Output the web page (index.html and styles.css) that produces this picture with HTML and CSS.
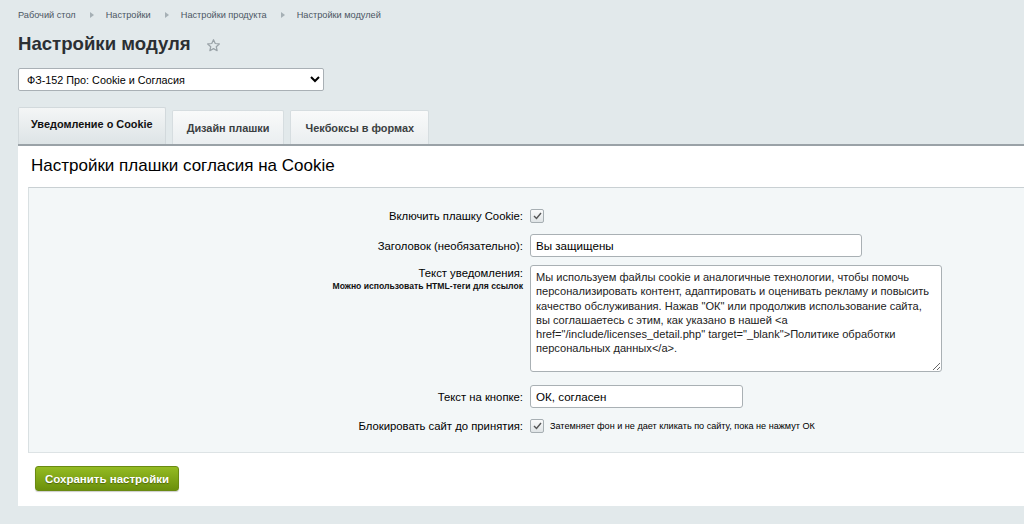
FILE: index.html
```html
<!DOCTYPE html>
<html lang="ru">
<head>
	<meta charset="utf-8">
	<title>Настройки модуля</title>
	<link rel="stylesheet" href="styles.css">
</head>
<body>

	<div class="crumbs">
		<a href="#">Рабочий стол</a><span class="sep"></span>
		<a href="#">Настройки</a><span class="sep"></span>
		<a href="#">Настройки продукта</a><span class="sep"></span>
		<a href="#">Настройки модулей</a>
	</div>

	<div class="title-row">
		<h1>Настройки модуля</h1>
		<svg class="star" width="15" height="15" viewBox="0 0 24 24"><path d="M12 2.8l2.8 6 6.5.7-4.9 4.4 1.4 6.4L12 17l-5.8 3.3 1.4-6.4-4.9-4.4 6.5-.7z" fill="none" stroke="#9aa3a8" stroke-width="2" stroke-linejoin="round"/></svg>
	</div>

	<select class="module-select">
		<option>ФЗ-152 Про: Cookie и Согласия</option>
	</select>

	<div class="tabs">
		<div class="tab active">Уведомление о Cookie</div>
		<div class="tab">Дизайн плашки</div>
		<div class="tab">Чекбоксы в формах</div>
	</div>

	<div class="panel">
		<h2>Настройки плашки согласия на Cookie</h2>

		<div class="form">
			<div class="row row-check">
				<div class="label">Включить плашку Cookie:</div>
				<div class="field"><span class="check"><svg width="9" height="8" viewBox="0 0 9 8"><path d="M1 4l2.5 2.5L8 1" fill="none" stroke="#555" stroke-width="1.4"/></svg></span></div>
			</div>
			<div class="row">
				<div class="label">Заголовок (необязательно):</div>
				<div class="field"><input class="text wide" type="text" value="Вы защищены"></div>
			</div>
			<div class="row row-top">
				<div class="label">Текст уведомления:<div class="note">Можно использовать HTML-теги для ссылок</div></div>
				<div class="field"><textarea class="area">Мы используем файлы cookie и аналогичные технологии, чтобы помочь персонализировать контент, адаптировать и оценивать рекламу и повысить качество обслуживания. Нажав "ОК" или продолжив использование сайта, вы соглашаетесь с этим, как указано в нашей &lt;a href="/include/licenses_detail.php" target="_blank"&gt;Политике обработки персональных данных&lt;/a&gt;.</textarea></div>
			</div>
			<div class="row">
				<div class="label">Текст на кнопке:</div>
				<div class="field"><input class="text short" type="text" value="ОК, согласен"></div>
			</div>
			<div class="row row-check">
				<div class="label">Блокировать сайт до принятия:</div>
				<div class="field"><span class="check"><svg width="9" height="8" viewBox="0 0 9 8"><path d="M1 4l2.5 2.5L8 1" fill="none" stroke="#555" stroke-width="1.4"/></svg></span><span class="hint">Затемняет фон и не дает кликать по сайту, пока не нажмут ОК</span></div>
			</div>
		</div>

		<button class="save">Сохранить настройки</button>
	</div>

</body>
</html>
```

FILE: styles.css
```css
body {
	margin: 0;
	padding: 0 0 0 18px;
	background: #e2e9eb;
	font-family: "Liberation Sans", Arial, sans-serif;
	color: #000;
	overflow: hidden;
	height: 524px;
}

.crumbs {
	display: flex;
	align-items: center;
	padding-top: 9px;
	height: 12px;
	font-size: 9.2px;
}
.crumbs a {
	color: #4b5663;
	text-decoration: none;
}
.crumbs .sep {
	width: 0;
	height: 0;
	margin: 0 12px 0 14px;
	border-left: 4px solid #a6b0b5;
	border-top: 3px solid transparent;
	border-bottom: 3px solid transparent;
}

.title-row {
	display: flex;
	align-items: center;
	height: 26px;
	margin-top: 10px;
}
h1 {
	margin: 0;
	font-size: 18.6px;
	font-weight: bold;
	color: #2b2f33;
}
.star {
	margin-left: 15px;
	margin-top: 2px;
}

.module-select {
	display: block;
	margin-top: 11px;
	width: 306px;
	height: 23px;
	font-family: "Liberation Sans", Arial, sans-serif;
	font-size: 10.8px;
	color: #000;
	background: #fff;
	border: 1px solid #a9b0b5;
	border-radius: 2px;
	padding: 0 4px;
}

.tabs {
	display: flex;
	align-items: flex-end;
	gap: 6px;
	margin-top: 15px;
	height: 38px;
}
.tab {
	display: flex;
	align-items: center;
	justify-content: center;
	height: 33px;
	padding: 0 14px;
	font-size: 10.9px;
	font-weight: bold;
	color: #3b3f42;
	background: linear-gradient(#f9fafa, #eaeef0);
	border: 1px solid #d6dde0;
	border-bottom: none;
	border-radius: 2px 2px 0 0;
}
.tab.active {
	height: 37px;
	padding: 0 12px 4px;
	box-sizing: border-box;
	color: #111;
	background: linear-gradient(#f4f6f6, #dde4e6);
	border-color: #d2d9dc;
}

.panel {
	background: #fff;
	border-top: 2px solid #9aa2a7;
	padding: 0 0 15px 10px;
}
h2 {
	margin: 0;
	padding: 10px 0 0 3px;
	height: 31px;
	font-size: 17px;
	font-weight: normal;
	color: #000;
}

.form {
	background: #f3f7f8;
	border-top: 1px solid #c9d0d3;
	border-left: 1px solid #d9e0e2;
	border-bottom: 1px solid #dde3e5;
	padding: 20px 0 18px;
}
.row {
	display: grid;
	grid-template-columns: 501px 1fr;
	align-items: center;
	margin-bottom: 10px;
	font-size: 11.3px;
}
.row:last-child {
	margin-bottom: 0;
}
.row-top {
	align-items: start;
	margin-bottom: 13px;
}
.row-check {
	height: 16px;
}
.label {
	text-align: right;
	padding-right: 7px;
	color: #000;
}
.row-top .label {
	padding-top: 0;
	line-height: 13px;
}
.note {
	font-size: 8.6px;
	font-weight: bold;
	color: #111;
	line-height: 12px;
}
.field {
	display: flex;
	align-items: center;
}
.check {
	display: flex;
	align-items: center;
	justify-content: center;
	width: 12px;
	height: 12px;
	border: 1px solid #a7afb3;
	border-radius: 2px;
	background: linear-gradient(#fafbfb, #dfe4e6);
}
.hint {
	margin-left: 6px;
	font-size: 9.1px;
	color: #000;
}
.text {
	height: 23px;
	box-sizing: border-box;
	border: 1px solid #a9b0b4;
	border-radius: 3px;
	background: #fff;
	padding: 0 5px;
	font-family: "Liberation Sans", Arial, sans-serif;
	font-size: 11.6px;
	color: #000;
}
.wide {
	width: 332px;
}
.short {
	width: 213px;
}
.area {
	width: 412px;
	height: 107px;
	margin-top: -2px;
	box-sizing: border-box;
	border: 1px solid #a9b0b4;
	border-radius: 3px;
	padding: 4px 5px;
	font-family: "Liberation Sans", Arial, sans-serif;
	font-size: 11.1px;
	line-height: 14.3px;
	color: #222;
	resize: vertical;
	background: #fff;
}

.save {
	margin: 13px 0 0 7px;
	width: 144px;
	height: 25px;
	border: 1px solid #6a8a12;
	border-radius: 3px;
	background: linear-gradient(#94bb22, #6b900c);
	color: #fff;
	font-family: "Liberation Sans", Arial, sans-serif;
	font-size: 11.5px;
	font-weight: bold;
	text-shadow: 0 1px 1px rgba(0, 0, 0, 0.35);
	box-shadow: 0 1px 1px rgba(0, 0, 0, 0.2);
}
```
